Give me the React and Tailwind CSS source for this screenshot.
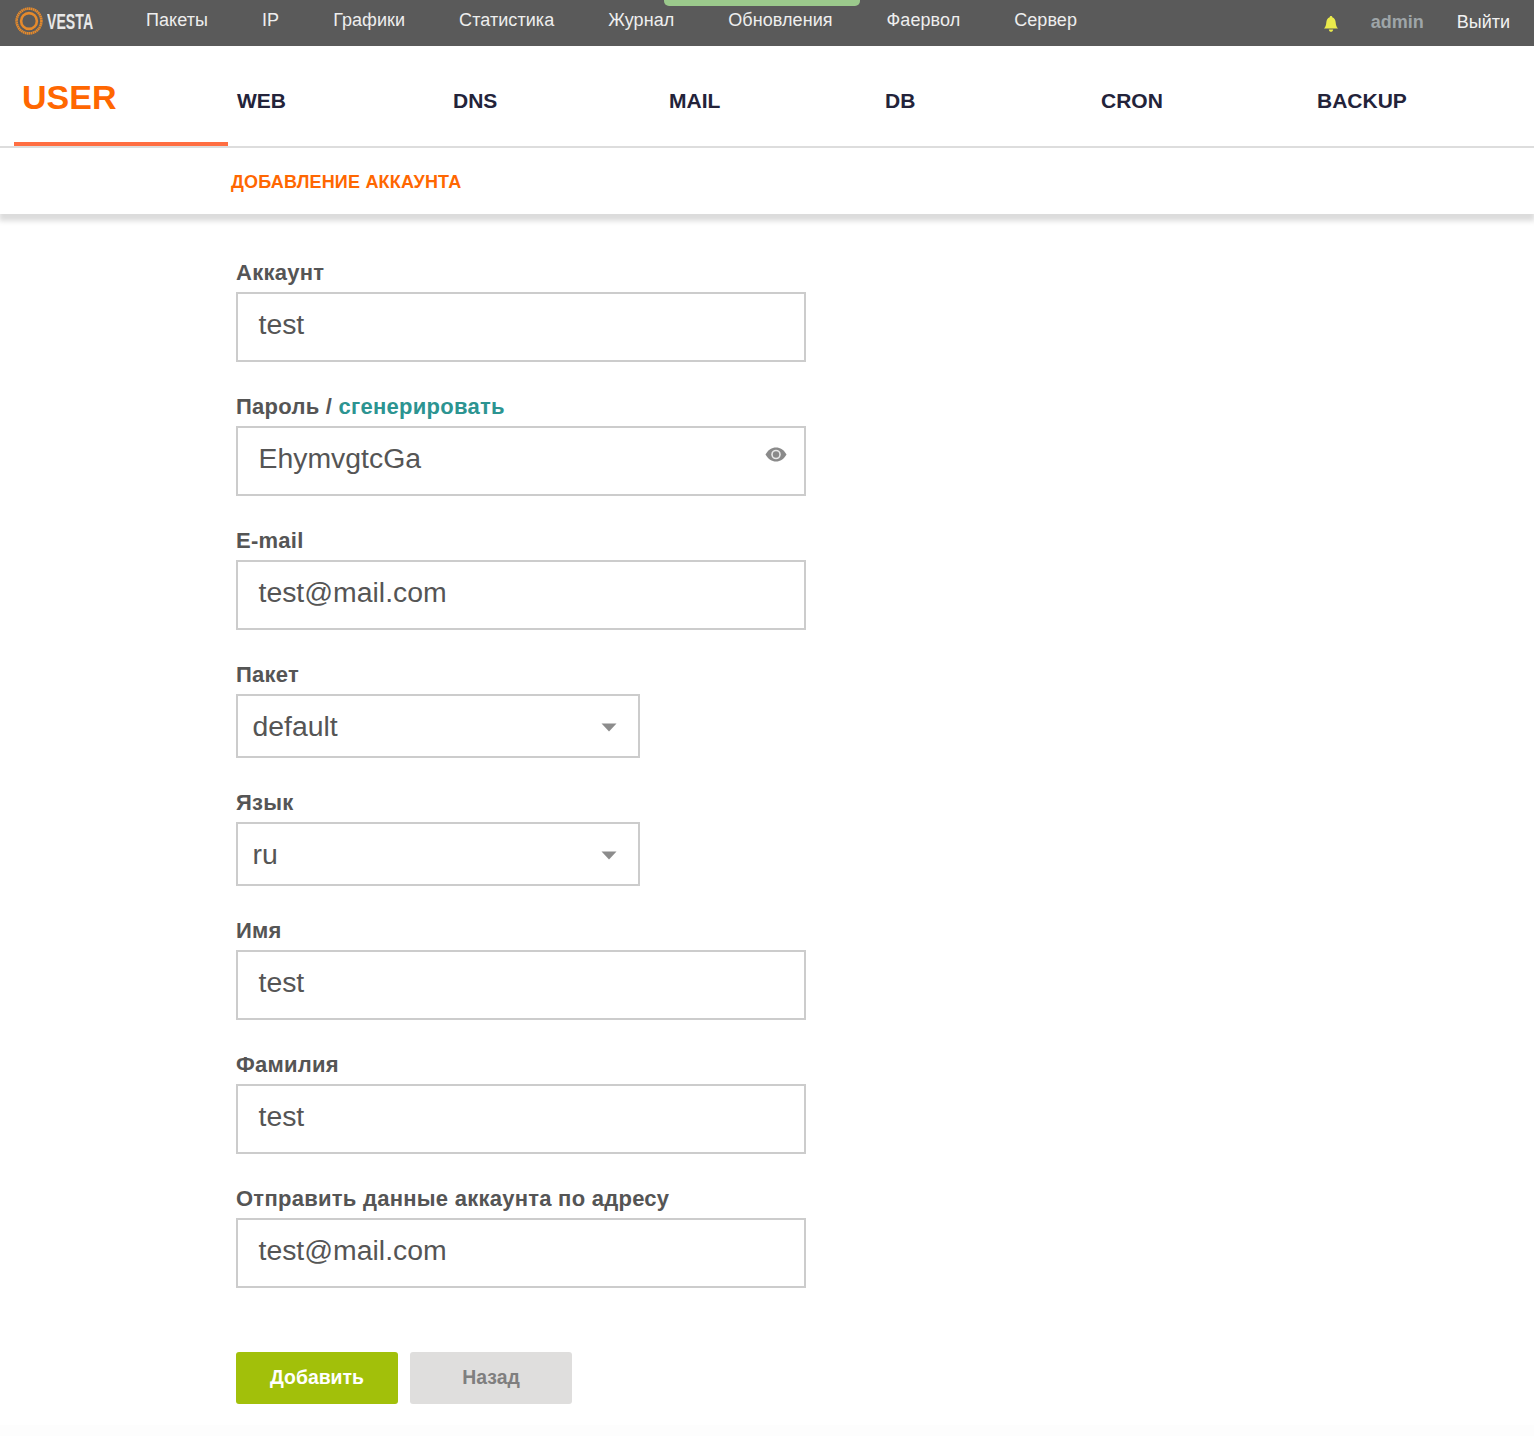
function Label({ children }) {
  return (
    <div className="h-[22px] text-[22px] leading-[22px] font-bold tracking-[0.26px] text-[#555]">
      {children}
    </div>
  );
}

function Field({ label, value, extra, eye }) {
  return (
    <div className="mb-[34px]">
      <Label>
        {label}
        {extra}
      </Label>
      <div className="relative mt-[8px] flex h-[70px] w-[570px] items-start border-2 border-[#ccc] bg-white pl-[20.5px] pt-[13px] text-[28.4px] leading-[34px] text-[#555]">
        {value}
        {eye && (
          <svg className="absolute right-[17px] top-[19px]" width="22" height="15" viewBox="0 0 22 15">
            <path d="M0.5 7.5C3 3 6.8 0.5 11 0.5s8 2.5 10.5 7c-2.5 4.5-6.3 7-10.5 7S3 12 0.5 7.5z" fill="#8a8a8a" />
            <circle cx="11" cy="7.5" r="4.8" fill="#e8e8e8" />
            <circle cx="11" cy="7.5" r="3.2" fill="#8a8a8a" />
          </svg>
        )}
      </div>
    </div>
  );
}

function SelectField({ label, value }) {
  return (
    <div className="mb-[34px]">
      <Label>{label}</Label>
      <div className="mt-[8px] flex h-[64px] w-[404px] items-center justify-between border-2 border-[#ccc] bg-white pl-[14.5px] pr-[21px] text-[28.4px] leading-[34px] text-[#555]">
        <span>{value}</span>
        <svg width="16" height="9" viewBox="0 0 16 9" className="mt-[2px]">
          <path d="M0.5 0.5h15L8 8.5z" fill="#8c8c8c" />
        </svg>
      </div>
    </div>
  );
}

const Logo = () => (
  <div className="flex items-center">
    <svg width="28" height="28" viewBox="0 0 28 28" className="mr-[4px] shrink-0">
      <circle cx="14" cy="14" r="12.4" fill="none" stroke="#e58a2c" strokeWidth="2.6" strokeDasharray="1.6 0.4" />
      <circle cx="14" cy="14" r="7.9" fill="none" stroke="#e58a2c" strokeWidth="2.6" />
    </svg>
    <span className="origin-left scale-x-[0.64] text-[22px] font-bold text-[#e8e8e8]">VESTA</span>
  </div>
);

export default function App() {
  const top = [
    ["Пакеты", "ml-[32px]"],
    ["IP", "ml-[54px]"],
    ["Графики", "ml-[54px]"],
    ["Статистика", "ml-[54px]"],
    ["Журнал", "ml-[54px]"],
    ["Обновления", "ml-[54px]"],
    ["Фаервол", "ml-[54px]"],
    ["Сервер", "ml-[54px]"],
  ];
  const tabs = ["WEB", "DNS", "MAIL", "DB", "CRON", "BACKUP"];
  return (
    <div className="min-h-[1436px] bg-white font-['Liberation_Sans',Arial,sans-serif]">
      <div className="relative flex h-[46px] items-start bg-[#5a5a5a] pl-[15px] text-[18px] leading-[41px] tracking-[0.06px] text-[#eee]">
        <div className="flex h-[42px] w-[99px] shrink-0 items-center">
          <Logo />
        </div>
        {top.map(([t, c]) => (
          <div key={t} className={c}>{t}</div>
        ))}
        <div className="absolute left-[664px] top-0 h-[6px] w-[196px] rounded-b-[5px] bg-[#9bc98c]" />
        <div className="ml-auto flex items-center pr-[24px] pt-[2px] tracking-normal">
          <svg width="16" height="18" viewBox="0 0 16 18" className="mr-[32px] mt-[2px]">
            <path d="M8 1c.8 0 1.3.5 1.3 1.2C11.5 3 12.5 5 12.7 7.5c.2 2.7.7 4.3 2.3 6H1c1.6-1.7 2.1-3.3 2.3-6C3.5 5 4.5 3 6.7 2.2 6.7 1.500 7.2 1 8 1z" fill="#eaea4c" />
            <path d="M5.8 14.5h4.4C10 16 9.1 16.8 8 16.8S6 16 5.8 14.5z" fill="#eaea4c" />
          </svg>
          <span className="font-bold text-[#9ea5a8]">admin</span>
          <span className="ml-[33px] text-[#f2f2f2]">Выйти</span>
        </div>
      </div>

      <div className="flex h-[102px] border-b-2 border-[#ddd] pl-[14px]">
        <div className="h-[100px] w-[214px] border-b-4 border-[#ff6e42] pl-[8px] pt-[29px] text-[34px] leading-[44px] font-bold text-[#ff6701]">
          USER
        </div>
        {tabs.map((t) => (
          <div key={t} className="h-[100px] w-[216px] pl-[9px] pt-[41px] text-[21px] leading-[28px] font-bold text-[#23233a]">
            {t}
          </div>
        ))}
      </div>

      <div className="h-[66px] pl-[231px] pt-[23px] text-[18px] leading-[22px] font-bold tracking-[0.2px] text-[#ff6701] shadow-[0_6px_5px_1px_#dcdcdc]">
        ДОБАВЛЕНИЕ АККАУНТА
      </div>

      <div className="pl-[236px] pt-[48px]">
        <Field label="Аккаунт" value="test" />
        <Field
          label="Пароль"
          value="EhymvgtcGa"
          eye
          extra={<span> / <span className="text-[#2c9491]">сгенерировать</span></span>}
        />
        <Field label="E-mail" value="test@mail.com" />
        <SelectField label="Пакет" value="default" />
        <SelectField label="Язык" value="ru" />
        <Field label="Имя" value="test" />
        <Field label="Фамилия" value="test" />
        <Field label="Отправить данные аккаунта по адресу" value="test@mail.com" />
        <div className="mt-[64px] flex gap-[12px] text-[19.4px] font-bold">
          <div className="flex h-[52px] w-[162px] items-center justify-center rounded-[3px] bg-[#a2c00a] text-white">Добавить</div>
          <div className="flex h-[52px] w-[162px] items-center justify-center rounded-[3px] bg-[#dfdedd] text-[#7f7f7f]">Назад</div>
        </div>
      </div>
      <div className="mt-[21px] h-[11px] bg-[#fdfdfd]" />
    </div>
  );
}
